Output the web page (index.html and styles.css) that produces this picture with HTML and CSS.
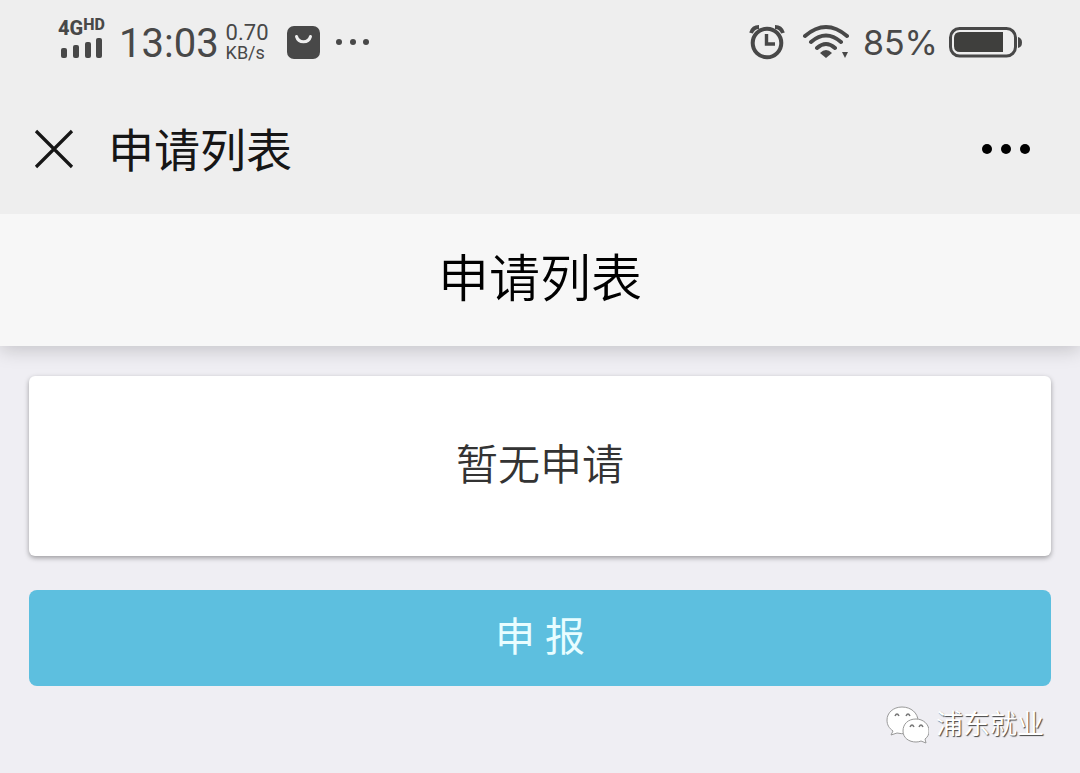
FILE: index.html
```html
<!DOCTYPE html>
<html lang="zh-CN">
<head>
  <meta charset="UTF-8">
  <meta name="viewport" content="width=device-width, initial-scale=1">
  <title>申请列表</title>
  <link rel="stylesheet" href="styles.css">
</head>
<body>
  <div class="status-bar">
    <div class="status-left">
      <div class="signal">
        <div class="network">4G<span class="hd">HD</span></div>
        <svg width="44" height="20" viewBox="0 0 44 20" fill="#484848">
          <rect x="3" y="10" width="6" height="10" rx="2"/>
          <rect x="15" y="7" width="6" height="13" rx="2"/>
          <rect x="27" y="4" width="6" height="16" rx="2"/>
          <rect x="38" y="0" width="6" height="20" rx="2"/>
        </svg>
      </div>
      <span class="clock">13:03</span>
      <div class="speed">
        <span class="speed-value">0.70</span>
        <span class="speed-unit">KB/s</span>
      </div>
      <svg class="app-icon" width="33" height="33" viewBox="0 0 33 33">
        <rect width="33" height="33" rx="7" fill="#484848"/>
        <path d="M9.500 10.500c2 7 12 7 14 0" fill="none" stroke="#eee" stroke-width="3" stroke-linecap="round"/>
      </svg>
      <svg width="34" height="8" viewBox="0 0 34 8" fill="#484848">
        <circle cx="3" cy="4" r="3"/>
        <circle cx="17" cy="4" r="3"/>
        <circle cx="30" cy="4" r="3"/>
      </svg>
    </div>
    <div class="status-right">
      <svg width="36" height="36" viewBox="0 0 36 36" fill="none" stroke="#484848">
        <circle cx="18" cy="19" r="14.300" stroke-width="4"/>
        <path d="M17.500 10V20H26" stroke-width="3.400"/>
        <path d="M2 9Q4 3 10 3M34 9Q32 3 26 3" stroke-width="3.800"/>
      </svg>
      <svg class="wifi" width="48" height="36" viewBox="0 0 48 36" fill="none" stroke="#484848" stroke-width="4" stroke-linecap="round">
        <path d="M3 12Q24-6 45 12M9 18Q24 5 39 18M15 24Q24 16 33 24"/>
        <path d="M18 29Q24 23 30 29L24 34z" fill="#484848" stroke="none"/>
        <path d="M40 28h6l-3 6z" fill="#484848" stroke="none"/>
      </svg>
      <span class="percent">85%</span>
      <svg width="73" height="31" viewBox="0 0 73 31">
        <rect x="1.500" y="1.500" width="65" height="27.500" rx="9" fill="none" stroke="#484848" stroke-width="3"/>
        <path d="M11 5H54V25H11Q5 25 5 19V11Q5 5 11 5z" fill="#3f3f3d"/>
        <path d="M69 10q4 1 4 5.500t-4 5.500z" fill="#484848"/>
      </svg>
    </div>
  </div>

  <div class="nav-bar">
    <button class="icon-btn" aria-label="关闭">
      <svg width="40" height="40" viewBox="0 0 40 40" stroke="#161616" stroke-width="3.200">
        <path d="M2 2L38 38M38 2L2 38"/>
      </svg>
    </button>
    <span class="nav-title">申请列表</span>
    <button class="icon-btn more" aria-label="更多">
      <svg width="50" height="12" viewBox="0 0 50 12" fill="#000">
        <circle cx="6" cy="6" r="5"/>
        <circle cx="25" cy="6" r="5"/>
        <circle cx="44" cy="6" r="5"/>
      </svg>
    </button>
  </div>

  <header class="page-header">
    <h1>申请列表</h1>
  </header>

  <main class="content">
    <div class="card">暂无申请</div>
    <button class="apply-btn">申 报</button>
  </main>

  <footer class="watermark">
    <svg width="44" height="38" viewBox="0 0 44 38" fill="#fff" stroke="#999" stroke-width="1">
      <path d="M17 1C8 1 2 7 2 14c0 5 2 8 6 11l-2 4 6-2c13 3 21-4 21-12C33 7 26 1 17 1z"/>
      <path d="M10 10q2-4 4 0M21 10q2-4 4 0" fill="none" stroke="#777" stroke-width="1.500"/>
      <path d="M31 13c-8 0-13 5-13 12s6 11 13 11q3 0 5-1l5 2-1-4c3-2 4-5 4-8 0-7-6-12-13-12z"/>
      <path d="M25 21q2-4 4 0M34 21q2-4 4 0" fill="none" stroke="#777" stroke-width="1.500"/>
    </svg>
    <span>浦东就业</span>
  </footer>
</body>
</html>
```
FILE: styles.css
```css
* {
  box-sizing: border-box;
}
body {
  margin: 0;
  background: #efeef3;
  font-family: Roboto, 'Noto Sans CJK SC', sans-serif;
}
svg {
  display: block;
  flex-shrink: 0;
}
button {
  border: none;
  cursor: pointer;
  font-family: inherit;
}
.status-bar {
  display: flex;
  justify-content: space-between;
  height: 84px;
  padding: 0 58px;
  background: #eee;
  color: #484848;
}
.status-left,
.status-right {
  display: flex;
  align-items: center;
}
.signal {
  width: 48px;
  margin-right: 13px;
  padding-bottom: 8px;
}
.network {
  display: flex;
  font-size: 20px;
  font-weight: 800;
  line-height: 20px;
}
.hd {
  font-size: 16px;
  line-height: 14px;
}
.clock {
  padding-top: 4px;
  font-size: 40px;
  line-height: 44px;
}
.speed {
  display: flex;
  flex-direction: column;
  width: 46px;
  margin: 0 15px 0 7px;
}
.speed-value {
  font-size: 22px;
  line-height: 22px;
}
.speed-unit {
  font-size: 18px;
  line-height: 18px;
}
.app-icon {
  margin-right: 16px;
}
.wifi {
  margin: 0 13px 0 17px;
}
.percent {
  margin-right: 11px;
  font-family: Inter, sans-serif;
  font-size: 34px;
}
/* keeps the header shadow from spilling upwards */
.nav-bar {
  position: relative;
  z-index: 1;
  display: flex;
  align-items: center;
  height: 130px;
  padding: 0 49px 0 34px;
  background: #eee;
}
.icon-btn {
  padding: 0;
  background: none;
}
.more {
  margin-left: auto;
}
.nav-title {
  margin-left: 34px;
  padding-bottom: 4px;
  color: #161616;
  font-size: 46px;
}
.page-header {
  padding: 28px 0;
  background: #f7f7f7;
  box-shadow: 0 4px 18px rgba(0, 0, 0, 0.18);
  text-align: center;
}
h1 {
  margin: 0;
  font-size: 51px;
  font-weight: 350;
  line-height: 76px;
}
.content {
  padding: 30px 29px 0;
}
.card {
  padding: 60px 20px;
  border-radius: 6px;
  background: #fff;
  box-shadow: 0 2px 5px rgba(0, 0, 0, 0.35);
  color: #333;
  font-size: 42px;
  font-weight: 350;
  line-height: 60px;
  text-align: center;
}
.apply-btn {
  display: block;
  width: 100%;
  margin-top: 34px;
  padding: 16px;
  border-radius: 8px;
  background: #5dbfdf;
  color: #e8fdff;
  font-size: 40px;
  line-height: 64px;
}
.watermark {
  display: flex;
  align-items: center;
  justify-content: flex-end;
  gap: 7px;
  padding: 19px 36px 19px;
  color: #fff;
  font-size: 27px;
  line-height: 40px;
  text-shadow: 1px 1px 1px #444;
}
```
